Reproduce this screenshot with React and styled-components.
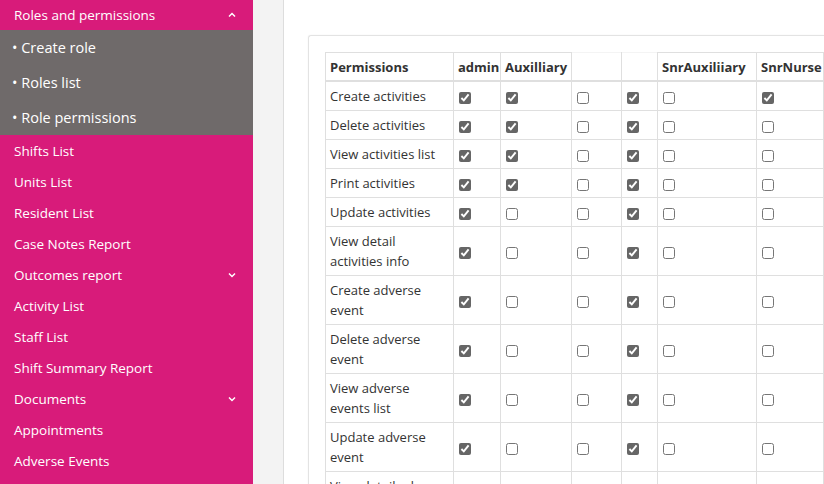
import React from "react";
import styled, { createGlobalStyle } from "styled-components";

const Global = createGlobalStyle`
  body { margin: 0; font-family: "Open Sans", "Segoe UI", sans-serif; background: #fff; }
`;

const Chevron = ({ up }) => (
  <svg width="10" height="10" viewBox="0 0 10 10" fill="none" stroke="#fff" strokeWidth="1.5">
    <path d={up ? "M2 6.5 L5 3.5 L8 6.5" : "M2 3.5 L5 6.5 L8 3.5"} />
  </svg>
);

const roles = ["admin", "Auxilliary", "", "", "SnrAuxiliiary", "SnrNurse"];
const widths = [128, 47, 71, 50, 36, 99, 67];

const rows = [
  ["Create activities", [1, 1, 0, 1, 0, 1]],
  ["Delete activities", [1, 1, 0, 1, 0, 0]],
  ["View activities list", [1, 1, 0, 1, 0, 0]],
  ["Print activities", [1, 1, 0, 1, 0, 0]],
  ["Update activities", [1, 0, 0, 1, 0, 0]],
  ["View detail activities info", [1, 0, 0, 1, 0, 0]],
  ["Create adverse event", [1, 0, 0, 1, 0, 0]],
  ["Delete adverse event", [1, 0, 0, 1, 0, 0]],
  ["View adverse events list", [1, 0, 0, 1, 0, 0]],
  ["Update adverse event", [1, 0, 0, 1, 0, 0]],
  ["View detail adverse event", [1, 0, 0, 1, 0, 0]],
];

const menu = [
  ["Shifts List"], ["Units List"], ["Resident List"], ["Case Notes Report"],
  ["Outcomes report", true], ["Activity List"], ["Staff List"],
  ["Shift Summary Report"], ["Documents", true], ["Appointments"], ["Adverse Events"],
];

export default function App() {
  return (
    <>
      <Global />
      <Page>
        <Sidebar>
          <MenuItem $h={30}>
            Roles and permissions <Chevron up />
          </MenuItem>
          <SubMenu>
            {["Create role", "Roles list", "Role permissions"].map((s) => (
              <SubItem key={s}>• {s}</SubItem>
            ))}
          </SubMenu>
          {menu.map(([m, c]) => (
            <MenuItem key={m} $h={31}>
              {m} {c && <Chevron />}
            </MenuItem>
          ))}
        </Sidebar>
        <Gutter />
        <Main>
          <Card>
            <Table>
              <colgroup>
                {widths.map((w, i) => <col key={i} style={{ width: w }} />)}
              </colgroup>
              <thead>
                <tr>
                  <Th>Permissions</Th>
                  {roles.map((r, i) => (
                    <Th key={i} $blank={!r}>{r}</Th>
                  ))}
                </tr>
              </thead>
              <tbody>
                {rows.map(([name, vals]) => (
                  <tr key={name}>
                    <Td>{name}</Td>
                    {vals.map((v, i) => (
                      <Td key={i}>
                        <Box type="checkbox" defaultChecked={!!v} />
                      </Td>
                    ))}
                  </tr>
                ))}
              </tbody>
            </Table>
          </Card>
        </Main>
      </Page>
    </>
  );
}

const Page = styled.div`
  display: flex;
  height: 484px;
  overflow: hidden;
`;

const Sidebar = styled.nav`
  width: 253px;
  flex-shrink: 0;
  background: #d81b7a;
  color: #fff;
  font-size: 13.5px;
`;

const MenuItem = styled.div`
  height: ${(p) => p.$h}px;
  display: flex;
  align-items: center;
  justify-content: space-between;
  padding: 0 16px 0 14px;
`;

const SubMenu = styled.div`
  background: #6f6a6a;
`;

const SubItem = styled.div`
  height: 35px;
  display: flex;
  align-items: center;
  padding-left: 12px;
  font-size: 14.5px;
`;

const Gutter = styled.div`
  width: 30px;
  background: #f3f3f3;
  flex-shrink: 0;
`;

const Main = styled.main`
  flex: 1;
  border-left: 1px solid #ddd;
  padding: 35px 0 0 24px;
  overflow: hidden;
`;

const Card = styled.div`
  border: 1px solid #e3e3e3;
  border-right: none;
  border-radius: 3px 0 0 0;
  padding: 16px 0 0 16px;
  box-shadow: 0 0 2px rgba(0,0,0,0.05);
`;

const Table = styled.table`
  border-collapse: collapse;
  table-layout: fixed;
  width: 498px;
  font-size: 13px;
  color: #333;
`;

const Th = styled.th`
  text-align: left;
  font-weight: 700;
  height: 27px;
  padding: 0 4px;
  white-space: nowrap;
  overflow: hidden;
  border: 1px solid #dfdfdf;
  border-bottom-width: 2px;
  border-top-color: ${(p) => (p.$blank ? "#f4f4f4" : "#dfdfdf")};
`;

const Td = styled.td`
  border: 1px solid #dfdfdf;
  padding: 4px 4px;
  height: 19px;
  line-height: 20px;
  vertical-align: middle;
`;

const Box = styled.input`
  margin: 0 0 0 1px;
  width: 12px;
  height: 12px;
  accent-color: #666;
  vertical-align: middle;
`;
